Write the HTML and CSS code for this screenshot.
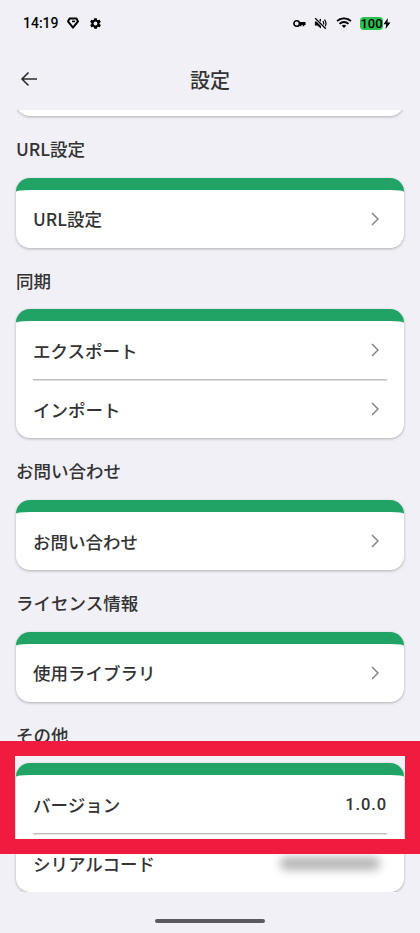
FILE: index.html
```html
<!DOCTYPE html>
<html lang="ja">
<head>
  <meta charset="UTF-8">
  <meta name="viewport" content="width=device-width, initial-scale=1.0">
  <title>設定</title>
  <link rel="stylesheet" href="styles.css">
</head>
<body>
  <div class="status-bar">
    <div class="status-left">
      <span class="time">14:19</span>
      <svg class="icon-shield" viewBox="0 0 12 12"><path d="M2.600 1.600h6.800L11 4.400 6 10.600 1 4.400z" fill="none" stroke="#000" stroke-width="2" stroke-linejoin="round"/><path d="M5 4.400h3" stroke="#000" stroke-width="1.600"/></svg>
      <svg class="icon-gear" viewBox="0 0 24 24"><path fill="#000" fill-rule="evenodd" d="M19.400 13a7.500 7.500 0 0 0 0-2l2.100-1.600a.5.5 0 0 0 .1-.6l-2-3.500a.5.5 0 0 0-.6-.2l-2.500 1a7.300 7.300 0 0 0-1.700-1l-.4-2.600a.5.5 0 0 0-.5-.4h-4a.5.5 0 0 0-.5.4l-.4 2.600a7.300 7.300 0 0 0-1.700 1l-2.500-1a.5.5 0 0 0-.6.2l-2 3.500a.5.5 0 0 0 .1.6L4.600 11a7.500 7.500 0 0 0 0 2l-2.100 1.600a.5.5 0 0 0-.1.600l2 3.500a.5.5 0 0 0 .6.2l2.500-1a7.300 7.300 0 0 0 1.700 1l.4 2.600a.5.5 0 0 0 .5.4h4a.5.5 0 0 0 .5-.4l.4-2.600a7.300 7.300 0 0 0 1.700-1l2.500 1a.5.5 0 0 0 .6-.2l2-3.500a.5.5 0 0 0-.1-.6zM12 15.500a3.500 3.500 0 1 1 0-7 3.500 3.500 0 0 1 0 7z"/></svg>
    </div>
    <div class="status-right">
      <svg class="icon-key" viewBox="0 0 14 9"><circle cx="4" cy="4.500" r="3" fill="none" stroke="#000" stroke-width="1.800"/><path d="M6.500 3h7v3.200h-1.300v1.300h-1.600V6.200H9.200v1.300H7.600V6.200H6.500z" fill="#000"/></svg>
      <svg class="icon-mute" viewBox="0 0 14 14"><path d="M1 4.800h2.500L7.500 1.500v11L3.500 9.200H1z" fill="#000"/><path d="M9.500 4.500c1 1.300 1 3.700 0 5M11.300 2.800c1.900 2.400 1.900 6 0 8.400" fill="none" stroke="#000" stroke-width="1.300"/><path d="M1.300 1.300l11.400 11.400" stroke="#f0f0f6" stroke-width="3"/><path d="M1.300 1.300l11.400 11.400" stroke="#000" stroke-width="1.400"/></svg>
      <svg class="icon-wifi" viewBox="0 0 16 12"><path d="M1 4.200a10 10 0 0 1 14 0M3.500 6.800a6.500 6.500 0 0 1 9 0" fill="none" stroke="#000" stroke-width="1.800"/><path d="M5.800 8.800a3.200 3.200 0 0 1 4.400 0L8 11z" fill="#000"/></svg>
      <div class="battery">
        <span class="battery-level">100</span>
        <svg class="icon-bolt" viewBox="0 0 8 11"><path d="M4.800 0L.5 6.200h2.700L2.600 11l4.900-6.600H4.500z" fill="#000"/></svg>
      </div>
    </div>
  </div>

  <header class="app-bar">
    <svg class="back" viewBox="0 0 18 16"><path d="M17 8H2M8.500 1.500L2 8l6.500 6.500" fill="none" stroke="#2c2c2c" stroke-width="1.600"/></svg>
    <h1>設定</h1>
  </header>

  <main class="content">
    <div class="card card-stub"></div>

    <h2>URL設定</h2>
    <section class="card">
      <div class="row"><span>URL設定</span><svg class="chevron" viewBox="0 0 8 14"><path d="M1 1l6 6-6 6" /></svg></div>
    </section>

    <h2>同期</h2>
    <section class="card">
      <div class="row"><span>エクスポート</span><svg class="chevron" viewBox="0 0 8 14"><path d="M1 1l6 6-6 6" /></svg></div>
      <div class="divider"></div>
      <div class="row"><span>インポート</span><svg class="chevron" viewBox="0 0 8 14"><path d="M1 1l6 6-6 6" /></svg></div>
    </section>

    <h2>お問い合わせ</h2>
    <section class="card">
      <div class="row"><span>お問い合わせ</span><svg class="chevron" viewBox="0 0 8 14"><path d="M1 1l6 6-6 6" /></svg></div>
    </section>

    <h2>ライセンス情報</h2>
    <section class="card">
      <div class="row"><span>使用ライブラリ</span><svg class="chevron" viewBox="0 0 8 14"><path d="M1 1l6 6-6 6" /></svg></div>
    </section>

    <h2>その他</h2>
    <section class="card">
      <div class="row"><span>バージョン</span><span class="value">1.0.0</span></div>
      <div class="divider"></div>
      <div class="row"><span>シリアルコード</span><span class="blurred"></span></div>
    </section>
  </main>

  <div class="home-area"><div class="home-bar"></div></div>

  <div class="highlight"></div>
</body>
</html>
```

FILE: styles.css
```css
* {
  box-sizing: border-box;
}
body {
  position: relative;
  display: flex;
  flex-direction: column;
  width: 420px;
  height: 933px;
  margin: 0;
  overflow: hidden;
  background-color: #f0f0f6;
  color: #333;
  font-family: "Noto Sans CJK JP", "Noto Sans", sans-serif;
}
.status-bar {
  display: flex;
  flex: none;
  justify-content: space-between;
  align-items: center;
  height: 46px;
  padding: 0 29px 0 23px;
  color: #000;
}
.status-left,
.status-right {
  display: flex;
  align-items: center;
}
.time {
  width: 44px;
  font-family: Roboto, sans-serif;
  font-size: 14px;
  font-weight: 500;
}
.icon-shield {
  width: 12px;
  height: 12px;
}
.icon-gear {
  width: 13px;
  height: 13px;
  margin-left: 10px;
}
.icon-key {
  width: 13px;
  height: 9px;
}
.icon-mute {
  width: 13px;
  height: 13px;
  margin-left: 8px;
}
.icon-wifi {
  width: 16px;
  height: 12px;
  margin-left: 9px;
}
.battery {
  display: flex;
  align-items: center;
  margin-left: 8px;
}
.battery-level {
  width: 23px;
  height: 13px;
  border-radius: 4px;
  background: #2cc14f;
  font-family: Roboto, sans-serif;
  font-size: 13px;
  font-weight: 500;
  line-height: 13px;
  text-align: center;
}
.icon-bolt {
  width: 8px;
  height: 11px;
}
.app-bar {
  position: relative;
  z-index: 1;
  display: flex;
  flex: none;
  justify-content: center;
  align-items: center;
  height: 64px;
  padding-top: 4px;
  background: #f0f0f6;
}
.back {
  position: absolute;
  left: 20px;
  top: 25px;
  width: 18px;
  height: 16px;
}
.app-bar h1 {
  margin: 0;
  font-size: 20px;
  font-weight: 500;
  line-height: 28px;
}
.content {
  flex: 1;
  min-height: 0;
  padding: 0 16px;
  overflow: hidden;
}
.content h2 {
  margin: 21px 0 16.7px;
  font-size: 17.5px;
  font-weight: 500;
  line-height: 24px;
}
.card {
  border-top: 12px solid #21a366;
  border-radius: 14px;
  background: #fff;
  box-shadow: 0 1px 3px rgba(0, 0, 0, 0.28);
}
.card-stub {
  height: 30px;
  margin-top: -24px;
}
.row {
  display: flex;
  justify-content: space-between;
  align-items: center;
  height: 58px;
  padding: 0 17px;
  font-size: 17.5px;
  font-weight: 500;
}
.divider {
  height: 1px;
  margin: 0 17px;
  background: #bdbdc1;
  box-shadow: 0 1px 0 #e2e2e5;
}
.chevron {
  width: 8px;
  height: 14px;
  margin-right: 8px;
  fill: none;
  stroke: #858585;
  stroke-width: 1.5;
}
.value {
  font-family: Roboto, sans-serif;
  font-size: 16.5px;
  font-weight: 500;
  letter-spacing: 0.9px;
}
.blurred {
  width: 100px;
  height: 13px;
  margin-right: 7px;
  border-radius: 6px;
  background: #b4b4b4;
  filter: blur(5px);
}
.home-area {
  display: flex;
  flex: none;
  justify-content: center;
  height: 41px;
  padding-top: 27px;
}
.home-bar {
  width: 110px;
  height: 4px;
  border-radius: 2px;
  background: #5a5a60;
}
.highlight {
  position: absolute;
  left: 0;
  top: 741px;
  width: 420px;
  height: 113px;
  border: 15px solid #f01c40;
}
```
